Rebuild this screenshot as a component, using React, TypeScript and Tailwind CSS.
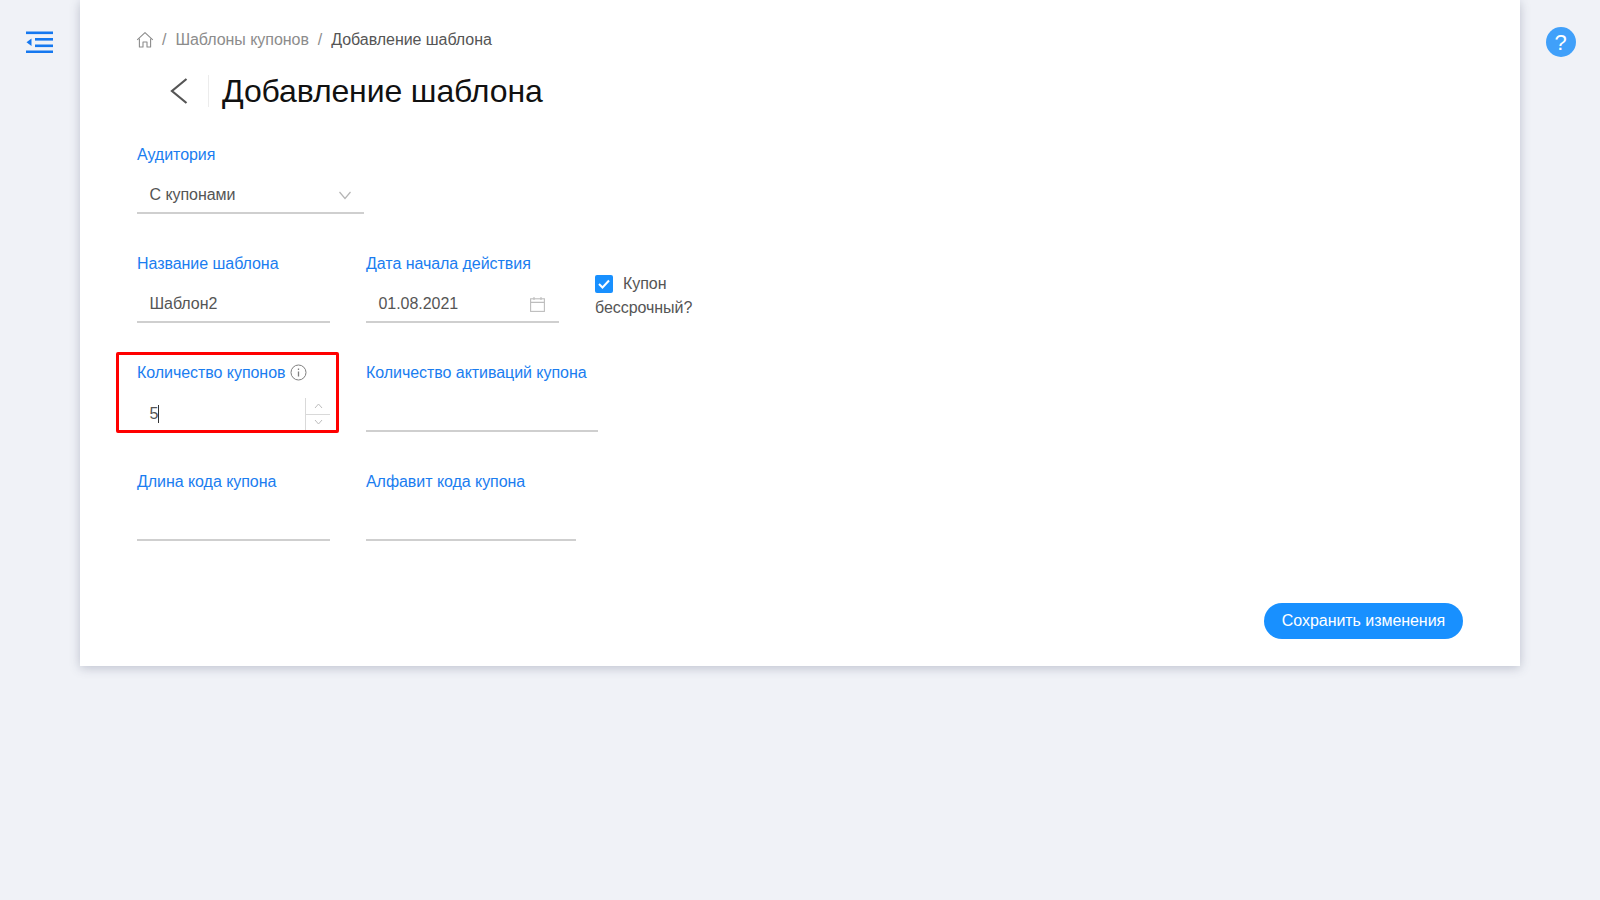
import React from "react";

function Field({ label, width, value, right, children }: { label: React.ReactNode; width: string; value?: React.ReactNode; right?: React.ReactNode; children?: React.ReactNode }) {
  return (
    <div className={`flex flex-col ${width}`}>
      <div className="flex h-[24px] items-center text-[16px] leading-[24px] tracking-[-0.05px] text-[#1a7df0]">{label}</div>
      <div className="relative mt-[15px] flex h-[32px] items-center border-b-[2px] border-[#cfcfcf] pl-[12.5px] pb-[4px] text-[16px] tracking-[-0.05px] text-[#555555]">
        {value}
        {right}
        {children}
      </div>
    </div>
  );
}

export default function App() {
  return (
    <div className="flex h-[900px] w-[1600px] overflow-hidden bg-[#f0f2f7] font-['Liberation_Sans',Arial,sans-serif]">
      <div className="flex w-[80px] shrink-0 justify-center pt-[31px] pr-[1px]">
        <svg width="28" height="22" viewBox="0 0 28 22" fill="none">
          <rect x="0" y="0.5" width="27" height="2.6" fill="#1578f0" />
          <rect x="9" y="7" width="18" height="2.6" fill="#1578f0" />
          <rect x="9" y="13.5" width="18" height="2.6" fill="#1578f0" />
          <rect x="0" y="19.5" width="27" height="2.6" fill="#1578f0" />
          <path d="M0.5 11.3 L5.5 7.5 V15 Z" fill="#1578f0" />
        </svg>
      </div>

      <div className="flex h-[666px] w-[1440px] shrink-0 flex-col bg-white pl-[57px] pr-[57px] shadow-[0_2px_10px_rgba(60,70,100,0.28)]">
        <div className="mt-[28px] flex h-[24px] items-center text-[16px] tracking-[-0.05px] text-[#8c8c8c]">
          <svg width="18" height="18" viewBox="0 0 18 18" fill="none" stroke="#8c8c8c" strokeWidth="1.1" className="-mt-[1px] -ml-[1px] mr-[8px]">
            <path d="M1.2 8.8 L9 1.6 L16.8 8.8" strokeLinejoin="round" />
            <path d="M3.4 7.4 V16 H7 V11 H11 V16 H14.6 V7.4" strokeLinejoin="round" />
          </svg>
          <span className="mr-[9px]">/</span>
          <span>Шаблоны купонов</span>
          <span className="ml-[9px] mr-[9px]">/</span>
          <span className="text-[#555555]">Добавление шаблона</span>
        </div>

        <div className="mt-[19px] flex h-[40px] items-center">
          <div className="flex h-[32px] w-[72px] items-center justify-end border-r border-[#ececec] pr-[19px]">
            <svg width="20" height="28" viewBox="0 0 20 28" fill="none" stroke="#555555" strokeWidth="2.2">
              <path d="M17.5 2 L3 14 L17.5 26" />
            </svg>
          </div>
          <h1 className="ml-[13px] text-[32px] font-normal leading-[40px] tracking-[-0.12px] text-[#111111]">Добавление шаблона</h1>
        </div>

        <div className="mt-[32px]">
          <Field
            label="Аудитория"
            width="w-[227px]"
            value="С купонами"
            right={
              <svg width="14" height="10" viewBox="0 0 14 10" fill="none" stroke="#b5b5b5" strokeWidth="1.2" className="absolute right-[12px] top-[8px]">
                <path d="M1.5 2 L7 8.5 L12.5 2" />
              </svg>
            }
          />
        </div>

        <div className="mt-[38px] flex items-start">
          <Field label="Название шаблона" width="w-[193px]" value="Шаблон2" />
          <div className="ml-[36px]">
            <Field
              label="Дата начала действия"
              width="w-[193px]"
              value="01.08.2021"
              right={
                <svg width="15" height="15" viewBox="0 0 15 15" fill="none" stroke="#bdbdbd" strokeWidth="1.1" className="absolute right-[14px] top-[6px]">
                  <rect x="0.6" y="1.8" width="13.8" height="12.6" />
                  <path d="M0.6 5.4 H14.4 M4 0 V3 M11 0 V3" />
                </svg>
              }
            />
          </div>
          <div className="ml-[36px] w-[110px] pt-[20px] text-[16px] leading-[24px] tracking-[-0.05px] text-[#555555]">
            <span className="mr-[10px] inline-flex h-[18px] w-[18px] items-center justify-center rounded-[2px] bg-[#1890ff] align-[0px]">
              <svg width="12" height="10" viewBox="0 0 12 10" fill="none" stroke="#ffffff" strokeWidth="2">
                <path d="M1 5 L4.5 8.5 L11 1.5" />
              </svg>
            </span>
            Купон бессрочный?
          </div>
        </div>

        <div className="mt-[38px] flex items-start">
          <div className="relative">
            <div className="absolute left-[-21px] top-[-9px] z-10 h-[81px] w-[223px] rounded-[2px] border-[3px] border-[#ff0000]" />
            <Field
              label={
                <>
                  Количество купонов
                  <svg width="17" height="17" viewBox="0 0 17 17" fill="none" stroke="#7f7f7f" strokeWidth="1" className="ml-[5px] -mt-[1px]">
                    <circle cx="8.5" cy="8.5" r="7.5" />
                    <path d="M8.5 7.5 V12.5 M8.5 4.5 V6" strokeWidth="1.3" />
                  </svg>
                </>
              }
              width="w-[193px]"
              value={<span className="mt-[1px] flex items-center">5<span className="h-[18px] w-[1px] bg-[#333333]" /></span>}
              right={
                <div className="absolute bottom-[0px] right-0 top-[-2px] flex w-[25px] flex-col border-l border-[#d9d9d9] bg-white">
                  <div className="flex flex-1 items-center justify-center border-b border-[#d9d9d9]">
                    <svg width="9" height="6" viewBox="0 0 9 6" fill="none" stroke="#bdbdbd" strokeWidth="1"><path d="M1 5 L4.5 1 L8 5" /></svg>
                  </div>
                  <div className="flex flex-1 items-center justify-center">
                    <svg width="9" height="6" viewBox="0 0 9 6" fill="none" stroke="#bdbdbd" strokeWidth="1"><path d="M1 1 L4.5 5 L8 1" /></svg>
                  </div>
                </div>
              }
            />
          </div>
          <div className="ml-[36px]">
            <Field label="Количество активаций купона" width="w-[232px]" />
          </div>
        </div>

        <div className="mt-[38px] flex items-start">
          <Field label="Длина кода купона" width="w-[193px]" />
          <div className="ml-[36px]">
            <Field label="Алфавит кода купона" width="w-[210px]" />
          </div>
        </div>

        <div className="mt-[62px] flex justify-end">
          <button className="h-[36px] w-[199px] rounded-full bg-[#1890ff] text-[16px] tracking-[-0.05px] text-white">Сохранить изменения</button>
        </div>
      </div>

      <div className="flex flex-1 justify-center pt-[27px] pl-[1px]">
        <div className="flex h-[30px] w-[30px] items-center justify-center rounded-full bg-[#40a0fa] text-[22px] font-normal text-white">?</div>
      </div>
    </div>
  );
}
